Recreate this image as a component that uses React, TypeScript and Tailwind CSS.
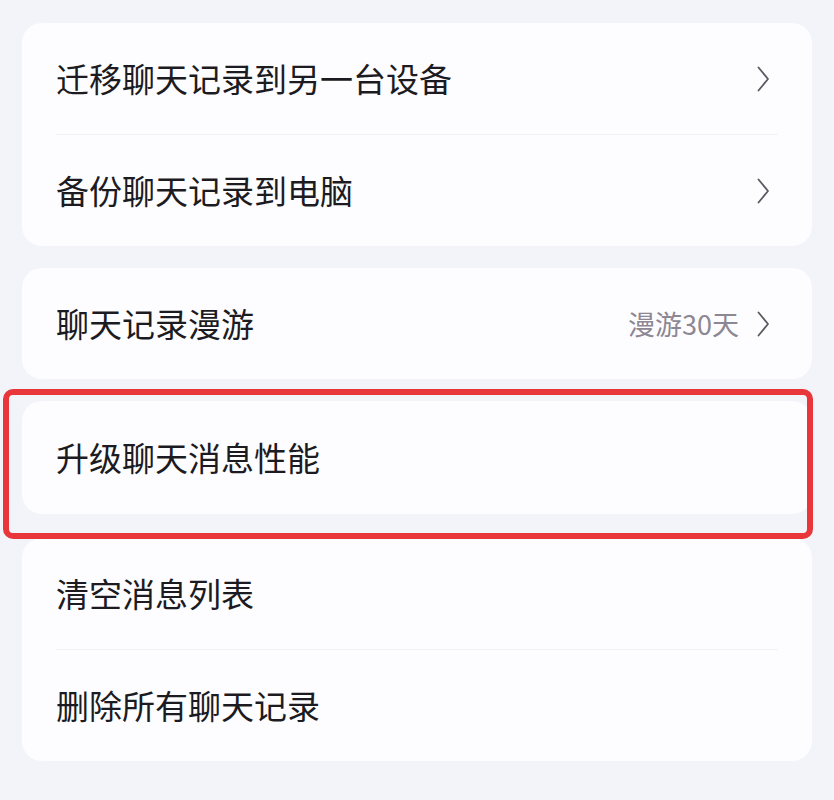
import { ReactNode } from "react"

function Chevron() {
  return (
    <svg width="14" height="26" viewBox="0 0 14 26" fill="none" className="shrink-0">
      <path d="M2.5 1.5 L12 13 L2.5 24.5" stroke="#5d5963" strokeWidth="1.8" strokeLinecap="round" strokeLinejoin="round" />
    </svg>
  )
}

function Row({ label, value, arrow, h = "h-[111px]" }: { label: string; value?: string; arrow?: boolean; h?: string }) {
  return (
    <div className={`flex items-center justify-between pl-[34px] pr-[42px] ${h}`}>
      <span className="text-[33px] leading-none text-[#1c1b21]">{label}</span>
      <div className="flex items-center gap-[17px]">
        {value && <span className="text-[27px] leading-none text-[#8c8793]">{value}</span>}
        {arrow && <Chevron />}
      </div>
    </div>
  )
}

function Card({ children, className = "" }: { children: ReactNode; className?: string }) {
  return <div className={`mx-[22px] rounded-[20px] bg-[#fdfdff] ${className}`}>{children}</div>
}

function Divider() {
  return <div className="mx-[34px] h-px bg-[#f1f2f6]" />
}

export default function App() {
  return (
    <div
      className="min-h-[800px] w-full bg-[#f2f4f9] pt-[23px] pb-[40px] flex flex-col gap-[22px]"
      style={{ fontFamily: '"Noto Sans CJK SC", "Noto Sans", sans-serif' }}
    >
      <Card>
        <Row label="迁移聊天记录到另一台设备" arrow />
        <Divider />
        <Row label="备份聊天记录到电脑" arrow />
      </Card>

      <Card>
        <Row label="聊天记录漫游" value="漫游30天" arrow />
      </Card>

      <div className="relative">
        <Card>
          <Row label="升级聊天消息性能" h="h-[113px]" />
        </Card>
        {/* highlight box */}
        <div className="pointer-events-none absolute left-[3px] right-[21px] top-[-12px] bottom-[-25px] rounded-[10px] border-[6px] border-[#e8363a]" />
      </div>

      <Card className="mt-[2px]">
        <Row label="清空消息列表" />
        <Divider />
        <Row label="删除所有聊天记录" />
      </Card>
    </div>
  )
}
